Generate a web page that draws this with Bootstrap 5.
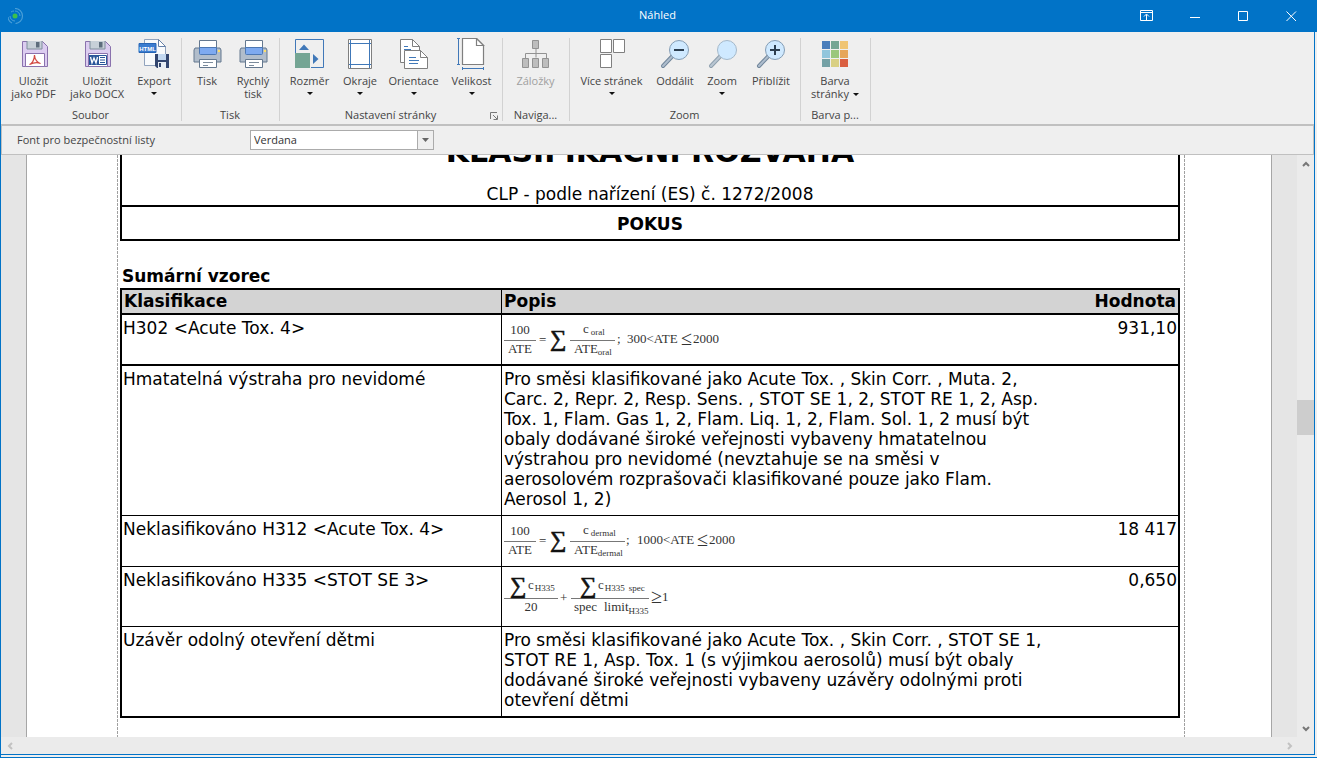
<!DOCTYPE html>
<html lang="cs">
<head>
<meta charset="utf-8">
<meta name="viewport" content="width=device-width, initial-scale=1">
<title>Náhled</title>
<link href="https://cdn.jsdelivr.net/npm/bootstrap@5.3.0/dist/css/bootstrap.min.css" rel="stylesheet">
<style>
:root { --win-blue: #0173c7; --chrome: #efefef; --line: #c0c0c0; }
body { font-family: "Open Sans", "Noto Sans", sans-serif; font-size: 11px; line-height: 13px; color: #444; background: var(--chrome); }
svg { display: block; }
.titlebar { height: 32px; background: var(--win-blue); color: #fff; padding-right: 2px; }
.title-grid { display: grid; grid-template-columns: 1fr auto 1fr; }
.win-btn { width: 48px; height: 32px; border: 0; background: none; padding: 0; color: #fff; }
.win-body { border: solid var(--win-blue); border-width: 0 1px 1px; margin-right: 2px; min-height: 0; }
.win-foot { height: 3px; border: solid var(--win-blue); border-width: 0 0 1px 1px; }
.ribbon { border-bottom: 2px solid var(--line); padding: 6px 0 3px; }
.ribbon-group { border-right: 1px solid #d2d2d2; padding: 0 3px 0 2px; }
.group-title { height: 13px; margin-top: 9px; text-align: center; }
.tool { border: 0; background: none; padding: 0; color: inherit; height: 61px; display: flex; flex-direction: column; align-items: center; white-space: nowrap; }
.tool svg.pic { width: 32px; height: 32px; margin-bottom: 4px; flex: none; }
.tool:disabled { color: #a0a0a0; }
.arrow { display: block; border: solid transparent; border-width: 3px 3px 0; border-top-color: #111; margin-top: 5px; }
.arrow-inline { display: inline-block; margin: 0 0 2px 4px; }
.t46 { width: 46px; } .t48 { width: 48px; } .t52 { width: 52px; } .t55 { width: 55px; } .t61 { width: 61px; } .t64 { width: 64px; } .t66 { width: 66px; } .t79 { width: 79px; }
.launcher { position: absolute; right: 4px; bottom: 1px; border: 0; background: none; padding: 0; }
.optbar { height: 29px; border: solid var(--line); border-width: 0 1px 1px; padding-left: 15px; }
.optbar label { width: 233px; padding-bottom: 1px; }
.font-pick { width: 184px; height: 20px; padding: 0 0 0 3px; border: 1px solid #ababab; border-radius: 0; color: #333; font-size: 11px; line-height: 16px; appearance: none;
  background: #fff url("data:image/svg+xml,%3Csvg xmlns='http://www.w3.org/2000/svg' width='16' height='18'%3E%3Cpath d='M0 0h16v18H0z' fill='%23efefef'/%3E%3Cpath d='M0 0h1v18H0z' fill='%23ababab'/%3E%3Cpath d='M5 7h7l-3.500 4z' fill='%23666'/%3E%3C/svg%3E") no-repeat right center; }
.viewer { background: #e5e5e5; min-height: 0; }
.sheet { margin: 0 25px; border: solid #a6a6a6; border-width: 0 1px; background: #fff; padding: 0 86px 0 90px; overflow: hidden; min-width: 0; }
.guides { flex: 1 0 auto; padding: 0 5px 0 3px;
  background: repeating-linear-gradient(#a0a0a0 0 3px, #fff 3px 4px) left / 1px 100% no-repeat, repeating-linear-gradient(#a0a0a0 0 3px, #fff 3px 4px) right / 1px 100% no-repeat; }
.scroll-v { width: 17px; background: #ebebeb; }
.scroll-h { height: 17px; background: #ebebeb; }
.scroll-btn { border: 0; padding: 0; background: none; width: 17px; height: 17px; display: grid; place-items: center; }
.thumb { height: 35px; background: #cdcdcd; }
.report { font-family: "DejaVu Sans", sans-serif; font-size: 17px; line-height: 20px; color: #000; }
.report-head { border: 2px solid #000; text-align: center; margin-top: -30px; margin-bottom: 25px; }
.report-head h1 { font-size: 30px; line-height: 50px; font-weight: 700; margin: 0; }
.report-head p { margin: 7px 0 1px; }
.report-head h2 { border-top: 2px solid #000; font-size: 17px; line-height: 30px; font-weight: 700; margin: 0; padding-top: 2px; }
.report h3 { font-size: 17px; line-height: 20px; font-weight: 700; margin: 0 0 2px; padding-left: 2px; }
.summary { width: 100%; border-collapse: separate; border-spacing: 0; border: 2px solid #000; table-layout: fixed; }
.summary th { background: #d3d3d3; line-height: 22px; padding: 0 2px 1px; border-bottom: 2px solid #000; }
.summary td { vertical-align: top; padding: 3px 1px 6px; border-bottom: 1px solid #000; }
.summary tr:first-child td { border-bottom-width: 2px; }
.summary tbody tr:last-child td { border-bottom: 0; }
.summary th:first-child, .summary td:first-child { width: 380px; border-right: 1px solid #000; }
.summary th:last-child { width: 126px; }
.summary td:nth-child(2) { padding-left: 2px; }
.formula { font-family: "Liberation Serif", serif; font-size: 13px; fill: #333; overflow: visible; margin-top: -1px; }
.formula .sub { font-size: 9px; }
.formula .sum { font-size: 23px; fill: #111; stroke: #111; stroke-width: .6px; }
.formula .rel { font-size: 20px; }
.formula path { stroke: #777; fill: none; }
</style>
</head>
<body class="vh-100 d-flex flex-column overflow-hidden">

<header class="titlebar title-grid align-items-center flex-shrink-0">
  <svg class="ms-2" width="16" height="16" fill="none" stroke="#4a9fd8"><circle cx="7" cy="8" r="2.500" fill="#3cc04c" stroke="none"/><path d="M7 3a5 5 0 0 1 5 5M7 13a5 5 0 0 1-5-5M3 4a6 6 0 0 1 3-1"/><path d="M7 .500a7.500 7.500 0 0 1 7.500 7.500 7.500 7.500 0 0 1-7 7.500M0 9a7 7 0 0 0 4 6" stroke-width="1.200"/></svg>
  <span class="pb-1">Náhled</span>
  <div class="d-flex justify-content-end">
    <button class="win-btn" aria-label="Skrýt pás karet"><svg class="mx-auto" width="14" height="12" fill="none" stroke="#fff"><path d="M.5.5h12v10H.5zM.5 2.500h12M6.500 10V4.500M4 6.500 6.500 4 9 6.500"/></svg></button>
    <button class="win-btn" aria-label="Minimalizovat"><svg class="mx-auto" width="11" height="11" stroke="#fff"><path d="M0 6.500h10"/></svg></button>
    <button class="win-btn" aria-label="Maximalizovat"><svg class="mx-auto" width="11" height="11" fill="none" stroke="#fff"><path d="M.5.5h9v9h-9z"/></svg></button>
    <button class="win-btn" aria-label="Zavřít"><svg class="mx-auto" width="11" height="11" stroke="#fff"><path d="m.5.5 9.500 9.500m0-9.500L.5 10"/></svg></button>
  </div>
</header>

<div class="win-body flex-grow-1 d-flex flex-column">
  <nav class="ribbon d-flex flex-shrink-0" aria-label="Pás karet">
    <section class="ribbon-group">
      <div class="d-flex">
        <button class="tool t61">
          <svg class="pic" viewBox="0 0 32 32"><path d="M4.500 3.500h20l5 5v20h-25z" fill="#dccdf0" stroke="#8a72ad"/><path d="M9 3h15v8H9z" fill="#c7d0d8"/><path d="M9 3v8h15V3" fill="none" stroke="#7f8e9c"/><path d="M18 4h3.500v5.500H18z" fill="#5d6d7c"/><path d="M7.500 15.500h19v13h-19z" fill="#fff" stroke="#8a72ad"/><path d="M11.500 26.500c2-.5 5-4 5-9.500 0 4 3 8 6 8.500-3-1.500-8-.5-11 1z" fill="none" stroke="#d24a43" stroke-width="1.200"/></svg>
          Uložit<br>jako PDF</button>
        <button class="tool t66">
          <svg class="pic" viewBox="0 0 32 32"><path d="M4.500 3.500h20l5 5v20h-25z" fill="#dccdf0" stroke="#8a72ad"/><path d="M9 3h15v8H9z" fill="#c7d0d8"/><path d="M9 3v8h15V3" fill="none" stroke="#7f8e9c"/><path d="M18 4h3.500v5.500H18z" fill="#5d6d7c"/><path d="M7.500 15.500h19v13h-19z" fill="#fff" stroke="#8a72ad"/><path d="M8 17h10v10H8z" fill="#2a5699"/><path d="m9.500 19 1.500 6 2-5 2 5 1.500-6" stroke="#fff" stroke-width="1.300" fill="none"/><path d="M18 17.500h7.500v9H18M19 19.500h5M19 22h5M19 24.500h5" stroke="#2a5699" fill="none"/></svg>
          Uložit<br>jako DOCX</button>
        <button class="tool t48">
          <svg class="pic" viewBox="0 0 32 32"><path d="M6.500 1.500h14l7 7v19h-21z" fill="#f8fafc" stroke="#91a3bd"/><path d="M20.500 1.500v7h7z" fill="#fff" stroke="#6480a8"/><path d="M1 5.500h17v9H1z" fill="#3b7cd0" stroke="#2866b5"/><text x="9.500" y="12.500" text-anchor="middle" font-size="6" font-family="Liberation Sans" font-weight="700" fill="#fff">HTML</text><path d="M17 16h14v14H19l-2-2z" fill="#33466f"/><path d="M20 16h8v6h-8z" fill="#c2d8f1"/><path d="M20 24h8v6h-8z" fill="#e8eef5"/><path d="M21 25h2v4h-2z" fill="#33466f"/></svg>
          Export<span class="arrow"></span></button>
      </div>
      <div class="group-title">Soubor</div>
    </section>

    <section class="ribbon-group">
      <div class="d-flex">
        <button class="tool t46">
          <svg class="pic" viewBox="0 0 32 32"><path d="M4 10h25l1 2v12H3V12z" fill="#b1bdcb" stroke="#64788f"/><path d="M8.500 2.500h17v12h-17z" fill="#fff" stroke="#64788f"/><path d="M8.500 9.500h17v6q0 1-1 1h-15q-1 0-1-1z" fill="#7eaaf0" stroke="#4d78b4"/><path d="M8.500 21.500h17v8h-17z" fill="#fff" stroke="#64788f"/><path d="M12 24.500h10M12 27.500h5" stroke="#7b8b9c"/><path d="M27 12h2v2h-2z" fill="#ffe066"/></svg>
          Tisk</button>
        <button class="tool t46">
          <svg class="pic" viewBox="0 0 32 32"><path d="M4 10h25l1 2v12H3V12z" fill="#b1bdcb" stroke="#64788f"/><path d="M8.500 2.500h17v12h-17z" fill="#fff" stroke="#64788f"/><path d="M8.500 9.500h17v6q0 1-1 1h-15q-1 0-1-1z" fill="#7eaaf0" stroke="#4d78b4"/><path d="M8.500 21.500h17v8h-17z" fill="#fff" stroke="#64788f"/><path d="M12 24.500h10M12 27.500h5" stroke="#7b8b9c"/><path d="M27 12h2v2h-2z" fill="#ffe066"/></svg>
          Rychlý<br>tisk</button>
      </div>
      <div class="group-title">Tisk</div>
    </section>

    <section class="ribbon-group position-relative">
      <div class="d-flex">
        <button class="tool t55">
          <svg class="pic" viewBox="0 0 32 32"><path d="M1.500 15V1.500h28v28H17" fill="none" stroke="#4078b8"/><path d="M1 15h15v15H1z" fill="#74a594"/><path d="m5 12 5-5.500 5 5.500zM19 16l5.500 5-5.500 5z" fill="#4078b8"/></svg>
          Rozměr<span class="arrow"></span></button>
        <button class="tool t46">
          <svg class="pic" viewBox="0 0 32 32"><path d="M4.500 1.500h23v29h-23z" fill="#fff" stroke="#7f7f7f"/><path d="M6.500 2v28M25.500 2v28M5 5.500h22M5 26.500h22" stroke="#4078b8"/></svg>
          Okraje<span class="arrow"></span></button>
        <button class="tool t61">
          <svg class="pic" viewBox="0 0 32 32" fill="#fff" stroke="#7f7f7f"><path d="M2.500 1.500h12l7 7v16h-19z"/><path d="M14.500 1.500v7h7z"/><path d="M6 8.500h4M6 11.500h7" stroke="#4078b8"/><path d="M6.500 12.500h16l7 7v11h-23z"/><path d="M22.500 12.500v7h7z"/><path d="M11 19.500h7M11 22.500h10M11 25.500h9" stroke="#4078b8"/></svg>
          Orientace<span class="arrow"></span></button>
        <button class="tool t55">
          <svg class="pic" viewBox="0 0 32 32" fill="#fff" stroke="#7f7f7f" stroke-width="1.200"><path d="M6.500.5h14l7 7v19h-21z"/><path d="M20.500.5v7h7z"/><path d="M2.500.5v26M1 .500h3M1 26.500h3M6.500 30.500h21M6.500 29v3M27.500 29v3" stroke="#4078b8" stroke-width="1"/></svg>
          Velikost<span class="arrow"></span></button>
      </div>
      <div class="group-title">Nastavení stránky</div>
      <button class="launcher" aria-label="Vzhled stránky"><svg width="8" height="8" fill="none" stroke="#777"><path d="M.5 7V.5H7M3 3l4 4M3.500 7.500h4v-4"/></svg></button>
    </section>

    <section class="ribbon-group">
      <button class="tool t61" disabled>
        <svg class="pic" viewBox="0 0 32 32" fill="#bdbdbd" stroke="#929292"><path d="M16 10.500v9M5.500 20v-4.500h21V20" fill="none"/><path d="M12.500 2.500h6v8h-6zM2.500 20.500h6v9h-6zM12.500 20.500h6v9h-6zM22.500 20.500h6v9h-6z"/></svg>
        Záložky</button>
      <div class="group-title">Naviga...</div>
    </section>

    <section class="ribbon-group">
      <div class="d-flex">
        <button class="tool t79">
          <svg class="pic" viewBox="0 0 32 32" fill="#fff" stroke="#7f7f7f"><path d="M4.500 1.500h11v13h-11zM17.500 1.500h11v13h-11zM4.500 16.500h11v13h-11z"/></svg>
          Více stránek<span class="arrow"></span></button>
        <button class="tool t48">
          <svg class="pic" viewBox="0 0 32 32"><path d="M14 17.500 4 28" stroke="#71869b" stroke-width="4" stroke-linecap="round"/><path d="M14 17.500 4 28" stroke="#aebdcd" stroke-width="2" stroke-linecap="round"/><circle cx="20" cy="12" r="9.500" fill="#cfe9ff" stroke="#849db5"/><path d="M15 12h10" stroke="#2c3e50" stroke-width="2"/></svg>
          Oddálit</button>
        <button class="tool t46">
          <svg class="pic" viewBox="0 0 32 32"><path d="M15 17.500 5 28" stroke="#8e9fae" stroke-width="4" stroke-linecap="round"/><path d="M15 17.500 5 28" stroke="#b9c6d2" stroke-width="2" stroke-linecap="round"/><circle cx="21" cy="12" r="9.500" fill="#cfe9ff" stroke="#a5b9ca"/></svg>
          Zoom<span class="arrow"></span></button>
        <button class="tool t52">
          <svg class="pic" viewBox="0 0 32 32"><path d="M14 17.500 4 28" stroke="#71869b" stroke-width="4" stroke-linecap="round"/><path d="M14 17.500 4 28" stroke="#aebdcd" stroke-width="2" stroke-linecap="round"/><circle cx="20" cy="12" r="9.500" fill="#cfe9ff" stroke="#849db5"/><path d="M15 12h10M20 7v10" stroke="#2c3e50" stroke-width="2"/></svg>
          Přiblížit</button>
      </div>
      <div class="group-title">Zoom</div>
    </section>

    <section class="ribbon-group">
      <button class="tool t64">
        <svg class="pic" viewBox="0 0 32 32"><path d="M3 3h8v8H3z" fill="#4a7ebb"/><path d="M12 3h8v8h-8z" fill="#74a594"/><path d="M21 3h8v8h-8z" fill="#f0c573"/><path d="M3 12h8v8H3z" fill="#92c6dc"/><path d="M12 12h8v8h-8z" fill="#9bc77c"/><path d="M21 12h8v8h-8z" fill="#e6a65a"/><path d="M3 21h8v8H3z" fill="#74a1a5"/><path d="M12 21h8v8h-8z" fill="#d9d083"/><path d="M21 21h8v8h-8z" fill="#da5f41"/></svg>
        Barva<span>stránky<span class="arrow arrow-inline"></span></span></button>
      <div class="group-title">Barva p...</div>
    </section>
  </nav>

  <div class="optbar d-flex align-items-center flex-shrink-0">
    <label for="font">Font pro bezpečnostní listy</label>
    <select id="font" class="font-pick"><option>Verdana</option></select>
  </div>

  <div class="viewer d-flex flex-grow-1">
    <main class="sheet flex-grow-1 d-flex flex-column">
      <div class="guides"><article class="report">
        <header class="report-head">
          <h1>KLASIFIKAČNÍ ROZVAHA</h1>
          <p>CLP - podle nařízení (ES) č. 1272/2008</p>
          <h2>POKUS</h2>
        </header>
        <h3>Sumární vzorec</h3>
        <table class="summary">
          <thead><tr><th>Klasifikace</th><th>Popis</th><th class="text-end">Hodnota</th></tr></thead>
          <tbody>
            <tr><td>H302 &lt;Acute Tox. 4&gt;</td><td>
              <svg class="formula" width="220" height="41">
                <path d="M0 23.500h32M66 23.500h45"/>
                <text x="16" y="17" text-anchor="middle">100</text><text x="16" y="36" text-anchor="middle">ATE</text>
                <text x="35" y="27">=</text><text class="sum" x="46" y="29">∑</text>
                <text x="79" y="16">c<tspan class="sub" dx="2" dy="2">oral</tspan></text>
                <text x="70" y="36">ATE<tspan class="sub" dy="2">oral</tspan></text>
                <text x="113" y="26">;</text><text x="123" y="26">300&lt;ATE</text><text class="rel" x="177" y="28">≤</text><text x="189" y="26">2000</text>
              </svg></td><td class="text-end">931,10</td></tr>
            <tr><td>Hmatatelná výstraha pro nevidomé</td><td class="text-nowrap">Pro směsi klasifikované jako Acute Tox. , Skin Corr. , Muta. 2,<br>Carc. 2, Repr. 2, Resp. Sens. , STOT SE 1, 2, STOT RE 1, 2, Asp.<br>Tox. 1, Flam. Gas 1, 2, Flam. Liq. 1, 2, Flam. Sol. 1, 2 musí být<br>obaly dodávané široké veřejnosti vybaveny hmatatelnou<br>výstrahou pro nevidomé (nevztahuje se na směsi v<br>aerosolovém rozprašovači klasifikované pouze jako Flam.<br>Aerosol 1, 2)</td><td></td></tr>
            <tr><td>Neklasifikováno H312 &lt;Acute Tox. 4&gt;</td><td>
              <svg class="formula" width="236" height="42">
                <path d="M0 23.500h32M66 23.500h55"/>
                <text x="16" y="17" text-anchor="middle">100</text><text x="16" y="36" text-anchor="middle">ATE</text>
                <text x="35" y="27">=</text><text class="sum" x="46" y="29">∑</text>
                <text x="79" y="16">c<tspan class="sub" dx="2" dy="2">dermal</tspan></text>
                <text x="70" y="36">ATE<tspan class="sub" dy="2">dermal</tspan></text>
                <text x="122" y="26">;</text><text x="133" y="26">1000&lt;ATE</text><text class="rel" x="193" y="28">≤</text><text x="205" y="26">2000</text>
              </svg></td><td class="text-end">18 417</td></tr>
            <tr><td>Neklasifikováno H335 &lt;STOT SE 3&gt;</td><td>
              <svg class="formula" width="170" height="51">
                <path d="M0 29.500h54M67 29.500h78"/>
                <text class="sum" x="6" y="24">∑</text><text x="24" y="20">c<tspan class="sub" dx="1" dy="2">H335</tspan></text><text x="27" y="42" text-anchor="middle">20</text>
                <text x="56" y="33">+</text>
                <text class="sum" x="76" y="24">∑</text><text x="94" y="20">c<tspan class="sub" dx="1" dy="2">H335</tspan><tspan class="sub" dx="4">spec</tspan></text>
                <text x="70" y="42">spec</text><text x="100" y="42">limit<tspan class="sub" dy="3">H335</tspan></text>
                <text class="rel" x="147" y="34">≥</text><text x="158" y="32">1</text>
              </svg></td><td class="text-end">0,650</td></tr>
            <tr><td>Uzávěr odolný otevření dětmi</td><td class="text-nowrap">Pro směsi klasifikované jako Acute Tox. , Skin Corr. , STOT SE 1,<br>STOT RE 1, Asp. Tox. 1 (s výjimkou aerosolů) musí být obaly<br>dodávané široké veřejnosti vybaveny uzávěry odolnými proti<br>otevření dětmi</td><td></td></tr>
          </tbody>
        </table>
      </article></div>
    </main>
    <div class="scroll-v d-flex flex-column flex-shrink-0">
      <button class="scroll-btn" aria-label="Nahoru"><svg width="8" height="6" fill="none" stroke="#777" stroke-width="2"><path d="m1 5 3-3 3 3"/></svg></button>
      <div style="flex-grow:228"></div><div class="thumb"></div><div style="flex-grow:285"></div>
      <button class="scroll-btn" aria-label="Dolů"><svg width="8" height="6" fill="none" stroke="#777" stroke-width="2"><path d="m1 1 3 3 3-3"/></svg></button>
    </div>
  </div>
  <div class="scroll-h d-flex justify-content-between flex-shrink-0 pe-3">
    <button class="scroll-btn" aria-label="Vlevo"><svg width="6" height="8" fill="none" stroke="#c2c2c2" stroke-width="2"><path d="M5 1 2 4l3 3"/></svg></button>
    <button class="scroll-btn" aria-label="Vpravo"><svg width="6" height="8" fill="none" stroke="#c2c2c2" stroke-width="2"><path d="m1 1 3 3-3 3"/></svg></button>
  </div>
</div>
<div class="win-foot flex-shrink-0"></div>
<script src="https://cdn.jsdelivr.net/npm/bootstrap@5.3.0/dist/js/bootstrap.bundle.min.js"></script>
</body>
</html>
